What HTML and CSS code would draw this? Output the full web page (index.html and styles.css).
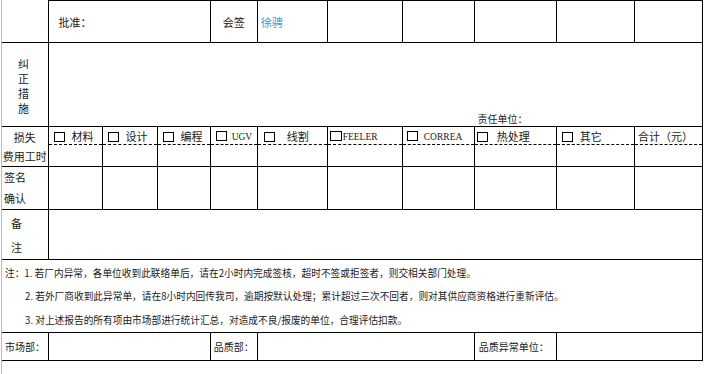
FILE: index.html
```html
<!DOCTYPE html>
<html lang="zh-CN">
<head>
<meta charset="utf-8">
<title>异常联络单</title>
<link rel="stylesheet" href="styles.css">
</head>
<body>
<div class="sheet">
<table class="grid">
  <colgroup>
    <col class="c0"><col class="c1"><col class="c2"><col class="c3"><col class="c4"><col class="c5"><col class="c6"><col class="c7"><col class="c8"><col class="c9"><col class="c10">
  </colgroup>
  <tr class="r1">
    <td class="corner"></td>
    <td colspan="3" class="pad10">批准：</td>
    <td class="center">会签</td>
    <td class="pad3 name">徐骋</td>
    <td></td><td></td><td></td><td></td><td></td>
  </tr>
  <tr class="r2">
    <td class="vert">纠<br>正<br>措<br>施</td>
    <td colspan="10" class="resp"><span class="small">责任单位：</span></td>
  </tr>
  <tr class="r3a">
    <td rowspan="2" class="center lh">损失<br>费用工时</td>
    <td class="chk"><span class="box"></span>材料</td>
    <td class="chk"><span class="box"></span>设计</td>
    <td class="chk"><span class="box"></span>编程</td>
    <td class="chk chk-u"><span class="box"></span><span class="latin">UGV</span></td>
    <td class="chk chk-w"><span class="box"></span>线割</td>
    <td class="chk chk-f"><span class="box"></span><span class="latin">FEELER</span></td>
    <td class="chk chk-c"><span class="box"></span><span class="latin">CORREA</span></td>
    <td class="chk chk-h"><span class="box"></span>热处理</td>
    <td class="chk"><span class="box"></span>其它</td>
    <td class="pad3">合计（元）</td>
  </tr>
  <tr class="r3b">
    <td></td><td></td><td></td><td></td><td></td><td></td><td></td><td></td><td></td><td></td>
  </tr>
  <tr class="r4">
    <td class="left lh2">签名<br>确认</td>
    <td></td><td></td><td></td><td></td><td></td><td></td><td></td><td></td><td></td><td></td>
  </tr>
  <tr class="r5">
    <td class="left2 lh3">备<br>注</td>
    <td colspan="10"></td>
  </tr>
  <tr class="r6">
    <td colspan="11" class="notes">
      <div class="note n1">注：1. 若厂内异常，各单位收到此联络单后，请在2小时内完成签核，超时不签或拒签者，则交相关部门处理。</div>
      <div class="note n2 indent">2. 若外厂商收到此异常单，请在8小时内回传我司，逾期按默认处理；累计超过三次不回者，则对其供应商资格进行重新评估。</div>
      <div class="note n3 indent">3. 对上述报告的所有项由市场部进行统计汇总，对造成不良/报废的单位，合理评估扣款。</div>
    </td>
  </tr>
  <tr class="r7">
    <td class="pad3 small">市场部：</td>
    <td colspan="3"></td>
    <td class="pad3 small">品质部：</td>
    <td colspan="3"></td>
    <td class="pad4 small">品质异常单位：</td>
    <td colspan="2"></td>
  </tr>
</table>
</div>
</body>
</html>
```

FILE: styles.css
```css
html, body {
  margin: 0;
  padding: 0;
  background: #fff;
}

body {
  width: 707px;
  height: 374px;
  overflow: hidden;
  font-family: "Noto Sans CJK SC", "Noto Sans", sans-serif;
  font-size: 11px;
  color: #1a1a1a;
}

.sheet {
  margin-left: 1px;
  border-left: 1px solid #a9c0df;
  height: 374px;
}

.grid {
  border-collapse: collapse;
  table-layout: fixed;
  width: 701px;
}

.c0 { width: 46px; }
.c1 { width: 54px; }
.c2 { width: 55px; }
.c3 { width: 53px; }
.c4 { width: 47px; }
.c5 { width: 70px; }
.c6 { width: 75px; }
.c7 { width: 72px; }
.c8 { width: 82px; }
.c9 { width: 78px; }
.c10 { width: 68px; }

.grid td {
  border: 1px solid #000;
  padding: 0;
  vertical-align: middle;
  white-space: nowrap;
  overflow: hidden;
  line-height: 12px;
}

.grid td:first-child {
  border-left: none;
}

.grid .r3b td:first-child {
  border-left: 1px solid #000;
}

.grid td.corner {
  border-top: none;
}

.r1 { height: 42px; }
.r2 { height: 84px; }
.r3a { height: 18px; }
.r3b { height: 22px; }
.r4 { height: 43px; }
.r5 { height: 50px; }
.r6 { height: 73px; }
.r7 { height: 28px; }

.r3a td.chk,
.r3a td.pad3 {
  border-bottom: 1px dashed #000;
}

.r3b td {
  border-top: 1px dashed #000;
}

.pad10 { padding-left: 10px !important; }
.pad3 { padding-left: 3px !important; }
.pad4 { padding-left: 4px !important; }
.center { text-align: center; }

.name { color: #2f9fe0; }

.vert {
  line-height: 15px !important;
  padding-left: 16px !important;
  padding-top: 2px !important;
}

.resp {
  vertical-align: bottom !important;
  padding-left: 429px !important;
  padding-bottom: 0 !important;
  line-height: 14px !important;
}

.small { font-size: 10px; }

.lh { line-height: 19px !important; }
.lh2 { line-height: 21px !important; padding-left: 2px !important; }
.left2 { padding-left: 9px !important; }
.lh3 { line-height: 24px !important; }

.chk {
  padding-left: 5px !important;
}

.box {
  display: inline-block;
  width: 9px;
  height: 8px;
  border: 1px solid #000;
  vertical-align: -1px;
  margin-right: 7px;
}

.chk-w { padding-left: 6px !important; }
.chk-w .box { margin-right: 12px; }
.chk-f { padding-left: 2px !important; }
.chk-f .box { width: 10px; margin-right: 1px; }
.chk-c { padding-left: 4px !important; }
.chk-c .box { margin-right: 6px; }
.chk-h { padding-left: 2px !important; }
.chk-h .box { margin-right: 9px; }
.chk-u .box { margin-right: 5px; }

.latin {
  font-family: "Liberation Serif", "Times New Roman", serif;
  font-size: 9.5px;
}

.notes {
  vertical-align: top !important;
  padding: 0 0 0 3px !important;
  font-size: 9.7px;
}

.note {
  line-height: 22px;
  height: 22px;
}

.n1 { margin-top: 2px; }
.n2 { margin-top: 1px; }
.n3 { margin-top: 2px; }

.note.indent {
  padding-left: 20px;
}
```
